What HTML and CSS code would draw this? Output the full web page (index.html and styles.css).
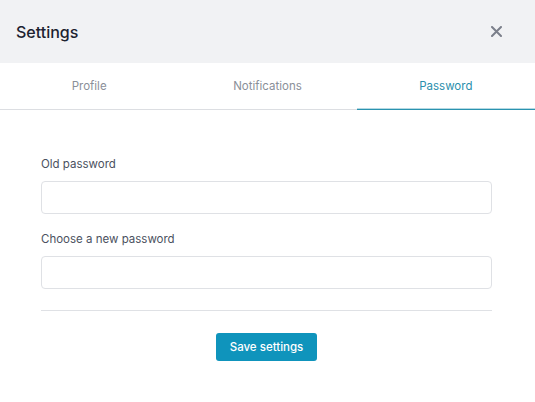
FILE: index.html
```html
<!DOCTYPE html>
<html lang="en">
<head>
<meta charset="utf-8">
<title>Settings</title>
<link rel="stylesheet" href="styles.css">
</head>
<body>
<div class="modal">
  <header class="modal-header">
    <h1 class="modal-title">Settings</h1>
    <button class="close-btn" aria-label="Close">
      <svg width="11" height="11" viewBox="0 0 11 11"><path d="M1 1L10 10M10 1L1 10" stroke="#7b7f8a" stroke-width="2" stroke-linecap="round"/></svg>
    </button>
  </header>
  <nav class="tabs">
    <a class="tab">Profile</a>
    <a class="tab">Notifications</a>
    <a class="tab active">Password</a>
  </nav>
  <form class="form">
    <label class="field">
      <span class="label">Old password</span>
      <input class="input" type="password">
    </label>
    <label class="field">
      <span class="label">Choose a new password</span>
      <input class="input" type="password">
    </label>
    <hr class="divider">
    <div class="actions">
      <button type="button" class="save-btn">Save settings</button>
    </div>
  </form>
</div>
</body>
</html>
```
FILE: styles.css
```css
* { box-sizing: border-box; }
html, body { margin: 0; padding: 0; background: #fff; }
body { font-family: Inter, "Liberation Sans", sans-serif; }
.modal { width: 535px; }
.modal-header {
  height: 63px;
  background: #f1f2f4;
  display: flex;
  align-items: center;
  justify-content: space-between;
  padding: 0 33px 0 16px;
}
.modal-title {
  margin: 0;
  font-size: 16px;
  font-weight: 500;
  color: #1c2230;
}
.close-btn {
  border: 0;
  background: none;
  padding: 0;
  width: 11px;
  height: 11px;
  display: flex;
}
.tabs {
  display: grid;
  grid-template-columns: 1fr 1fr 1fr;
}
.tab {
  height: 47px;
  display: flex;
  align-items: center;
  justify-content: center;
  font-size: 11.5px;
  color: #8a8f99;
  border-bottom: 1px solid #dcdee2;
}
.tab.active {
  color: #2b8fad;
  border-bottom: 1px solid #2a93b0;
  box-shadow: inset 0 -1px 0 rgba(42, 147, 176, 0.35);
}
.form {
  padding: 47px 43px 0 41px;
  display: flex;
  flex-direction: column;
}
.field {
  display: flex;
  flex-direction: column;
  margin-bottom: 18px;
}
.label {
  font-size: 11.5px;
  color: #4b5160;
  line-height: 14px;
  margin-bottom: 10px;
}
.input {
  height: 33px;
  border: 1px solid #dfe1e5;
  border-radius: 4px;
  background: #fff;
  font: inherit;
}
.divider {
  margin: 3px 0 0;
  border: 0;
  border-top: 1px solid #dfe1e5;
}
.actions {
  display: flex;
  justify-content: center;
  padding-top: 22px;
}
.save-btn {
  width: 101px;
  height: 28px;
  border: 0;
  border-radius: 3px;
  background: #0f94bc;
  color: #fff;
  font-family: inherit;
  font-size: 11.5px;
  font-weight: 500;
}
```
